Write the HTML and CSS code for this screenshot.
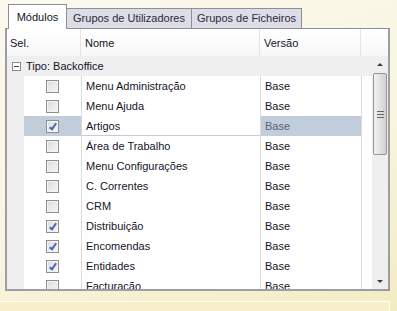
FILE: index.html
```html
<!DOCTYPE html>
<html lang="pt">
<head>
  <meta charset="UTF-8" />
  <title>Módulos</title>
  <link rel="stylesheet" href="styles.css">
</head>
<body>

  <div class="tabs">
    <div class="tab active">Módulos</div>
    <div class="tab t-users">Grupos de Utilizadores</div>
    <div class="tab t-files">Grupos de Ficheiros</div>
  </div>

  <div class="frame">
    <div class="head">
      <div class="hcell c-sel">Sel.</div>
      <div class="hcell c-nome">Nome</div>
      <div class="hcell c-ver">Versão</div>
      <div class="hcell c-fill"></div>
    </div>

    <div class="content">
      <div class="rows">
        <div class="group"><span class="toggle"></span>Tipo: Backoffice</div>

        <div class="row"><div class="indent"></div><div class="cell c-sel"><span class="chk"></span></div><div class="cell c-nome">Menu Administração</div><div class="cell c-ver">Base</div><div class="cell c-fill2"></div></div>
        <div class="row"><div class="indent"></div><div class="cell c-sel"><span class="chk"></span></div><div class="cell c-nome">Menu Ajuda</div><div class="cell c-ver">Base</div><div class="cell c-fill2"></div></div>
        <div class="row selected"><div class="indent"></div><div class="cell c-sel"><span class="chk on"></span></div><div class="cell c-nome focus">Artigos</div><div class="cell c-ver">Base</div><div class="cell c-fill2"></div></div>
        <div class="row"><div class="indent"></div><div class="cell c-sel"><span class="chk"></span></div><div class="cell c-nome">Área de Trabalho</div><div class="cell c-ver">Base</div><div class="cell c-fill2"></div></div>
        <div class="row"><div class="indent"></div><div class="cell c-sel"><span class="chk"></span></div><div class="cell c-nome">Menu Configurações</div><div class="cell c-ver">Base</div><div class="cell c-fill2"></div></div>
        <div class="row"><div class="indent"></div><div class="cell c-sel"><span class="chk"></span></div><div class="cell c-nome">C. Correntes</div><div class="cell c-ver">Base</div><div class="cell c-fill2"></div></div>
        <div class="row"><div class="indent"></div><div class="cell c-sel"><span class="chk"></span></div><div class="cell c-nome">CRM</div><div class="cell c-ver">Base</div><div class="cell c-fill2"></div></div>
        <div class="row"><div class="indent"></div><div class="cell c-sel"><span class="chk on"></span></div><div class="cell c-nome">Distribuição</div><div class="cell c-ver">Base</div><div class="cell c-fill2"></div></div>
        <div class="row"><div class="indent"></div><div class="cell c-sel"><span class="chk on"></span></div><div class="cell c-nome">Encomendas</div><div class="cell c-ver">Base</div><div class="cell c-fill2"></div></div>
        <div class="row"><div class="indent"></div><div class="cell c-sel"><span class="chk on"></span></div><div class="cell c-nome">Entidades</div><div class="cell c-ver">Base</div><div class="cell c-fill2"></div></div>
        <div class="row"><div class="indent"></div><div class="cell c-sel"><span class="chk"></span></div><div class="cell c-nome">Facturação</div><div class="cell c-ver">Base</div><div class="cell c-fill2"></div></div>
      </div>

      <div class="scrollbar">
        <div class="sb-btn"><span class="arrow up"></span></div>
        <div class="thumb"><span class="grip"></span></div>
        <div class="sb-space"></div>
        <div class="sb-btn"><span class="arrow down"></span></div>
      </div>
    </div>
  </div>

  <div class="footer"></div>

</body>
</html>
```

FILE: styles.css
```css
body {
  margin: 0;
  width: 397px;
  height: 311px;
  overflow: hidden;
  font-family: "Liberation Sans", Arial, sans-serif;
  font-size: 11px;
  color: #141428;
  background: linear-gradient(160deg, #fbf9ee 0%, #f9f5e0 55%, #f3ecc2 100%);
}

/* tabs */
.tabs {
  display: flex;
  align-items: flex-end;
  height: 28px;
  padding-left: 8px;
}
.tab {
  height: 19px;
  line-height: 19px;
  text-align: center;
  white-space: nowrap;
  border: 1px solid #8d8e9a;
  border-bottom: none;
  border-left: none;
  background: #dcdde6;
  color: #2a2a3a;
}
.tab.active {
  width: 57px;
  height: 24px;
  line-height: 25px;
  border-left: 1px solid #8d8e9a;
  background: #fff;
  margin-bottom: -1px;
  position: relative;
  z-index: 1;
  color: #141428;
}
.t-users { width: 124px; }
.t-files { width: 109px; }

/* grid frame */
.frame {
  margin-left: 5px;
  width: 381px;
  height: 260px;
  border: 2px solid #9d9da5;
  border-top: 1px solid #8d8e9a;
  background: #fff;
  display: flex;
  flex-direction: column;
}

.head {
  display: flex;
  height: 27px;
  background: linear-gradient(#ffffff, #f7f7f7);
  flex: none;
}
.hcell {
  line-height: 28px;
  padding-left: 4px;
  border-left: 1px solid #e4e4e4;
}
.head .c-sel { width: 70px; padding-left: 3px; border-left: none; }
.head .c-nome { width: 174px; }
.head .c-ver { width: 96px; }
.head .c-fill { flex: 1; }

.content {
  display: flex;
  flex: 1;
  min-height: 0;
}
.rows {
  flex: 1;
  overflow: hidden;
}

.group {
  height: 20px;
  line-height: 20px;
  background: #efefef;
  padding-left: 5px;
  display: flex;
  align-items: center;
}
.toggle {
  width: 7px;
  height: 7px;
  border: 1px solid #8c8c8c;
  background: #fff;
  margin-right: 5px;
  position: relative;
}
.toggle::after {
  content: "";
  position: absolute;
  left: 1px;
  top: 3px;
  width: 5px;
  height: 1px;
  background: #444;
}

.row {
  display: flex;
  height: 20px;
  line-height: 20px;
}
.indent {
  width: 17px;
  background: #efefef;
}
.cell {
  border-left: 1px solid #dcdcdc;
  padding-left: 4px;
  white-space: nowrap;
}
.row .c-sel {
  width: 57px;
  padding: 0;
  border-left: none;
  display: flex;
  align-items: center;
  justify-content: center;
}
.row .c-nome { width: 174px; }
.row .c-ver { width: 96px; }
.row .c-fill2 { flex: 1; padding: 0; }

.row.selected .c-sel,
.row.selected .c-ver { background: #c1cddb; }
.row.selected .c-ver { color: #56647a; }
.row.selected .c-nome.focus { box-shadow: inset 0 -1px 0 #c1cddb; }

/* checkbox */
.chk {
  width: 11px;
  height: 11px;
  border: 1px solid #8e8f8f;
  background: linear-gradient(135deg, #dcdcdc, #f8f8f8);
  box-shadow: inset 0 0 0 1px #f4f4f4;
  position: relative;
}
.chk.on::after {
  content: "";
  position: absolute;
  left: 4px;
  top: 1px;
  width: 2px;
  height: 6px;
  border: solid #4c63b8;
  border-width: 0 2px 2px 0;
  transform: rotate(35deg);
}

/* scrollbar */
.scrollbar {
  width: 16px;
  flex: none;
  background: #efefef;
  display: flex;
  flex-direction: column;
}
.sb-btn {
  height: 16px;
  display: flex;
  align-items: center;
  justify-content: center;
}
.arrow {
  width: 0;
  height: 0;
  border-left: 3px solid transparent;
  border-right: 3px solid transparent;
}
.arrow.up { border-bottom: 3px solid #3c3c3c; }
.arrow.down { border-top: 3px solid #3c3c3c; }
.thumb {
  height: 80px;
  margin: 1px 1px 0;
  border: 1px solid #959595;
  border-radius: 2px;
  background: linear-gradient(to right, #f2f2f2, #dedede 60%, #d2d2d2);
  display: flex;
  align-items: center;
  justify-content: center;
}
.grip {
  width: 7px;
  height: 5px;
  border-top: 1px solid #666;
  border-bottom: 1px solid #666;
  position: relative;
}
.grip::after {
  content: "";
  position: absolute;
  left: 0;
  right: 0;
  top: 2px;
  height: 1px;
  background: #666;
}
.sb-space { flex: 1; }

.footer {
  margin-top: 10px;
  width: 389px;
  height: 12px;
  border-top: 1px solid #fffdf4;
  border-right: 1px solid #fffdf4;
  background: #f6efc9;
}
```
